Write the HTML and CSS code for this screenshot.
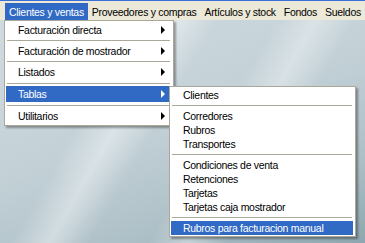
FILE: index.html
```html
<!DOCTYPE html>
<html lang="es">
<head>
    <meta charset="UTF-8">
    <title>Menu</title>
    <link rel="stylesheet" href="styles.css">
</head>
<body>
    <div class="menubar">
        <span class="bar-item active">Clientes y ventas</span>
        <span class="bar-item">Proveedores y compras</span>
        <span class="bar-item">Artículos y stock</span>
        <span class="bar-item">Fondos</span>
        <span class="bar-item">Sueldos</span>
    </div>

    <div class="desktop">
        <!-- menu principal -->
        <div class="menu main-menu">
            <div class="item has-sub">Facturación directa</div>
            <div class="sep"></div>
            <div class="item has-sub">Facturación de mostrador</div>
            <div class="sep"></div>
            <div class="item has-sub">Listados</div>
            <div class="sep wide"></div>
            <div class="item has-sub selected">Tablas</div>
            <div class="sep wide"></div>
            <div class="item has-sub">Utilitarios</div>
        </div>

        <!-- submenu Tablas -->
        <div class="menu sub-menu">
            <div class="item">Clientes</div>
            <div class="sep"></div>
            <div class="item">Corredores</div>
            <div class="item">Rubros</div>
            <div class="item">Transportes</div>
            <div class="sep"></div>
            <div class="item">Condiciones de venta</div>
            <div class="item">Retenciones</div>
            <div class="item">Tarjetas</div>
            <div class="item">Tarjetas caja mostrador</div>
            <div class="sep"></div>
            <div class="item selected">Rubros para facturacion manual</div>
        </div>
    </div>
</body>
</html>
```

FILE: styles.css
```css
/* --- base --- */
body {
    margin: 0;
    width: 365px;
    height: 243px;
    overflow: hidden;
    font-family: 'Liberation Sans', Arial, sans-serif;
    font-size: 10.5px;
    letter-spacing: -0.3px;
    color: #000;
    background: #ece9d8;
}

/* --- barra de menu --- */
.menubar {
    height: 20px;
    display: flex;
    align-items: stretch;
    padding: 0 0 0 5px;
    border-top: 1px solid #3a6fd8;
    background: #ece9d8;
    box-sizing: border-box;
}

.bar-item {
    display: flex;
    align-items: center;
    padding: 0 4px;
    margin-top: 2px;
    white-space: nowrap;
}

.bar-item.active {
    background: #316ac5;
    color: #fff;
}

/* --- fondo --- */
.desktop {
    position: relative;
    height: 223px;
    background:
        linear-gradient(120deg,
            transparent 0 28%,
            rgba(255,255,255,0.4) 36%,
            transparent 44% 56%,
            rgba(255,255,255,0.35) 64%,
            transparent 72%),
        linear-gradient(160deg, #d0dbe0 0%, #c3d1d7 45%, #aec0c7 75%, #8fa7b0 100%);
}

/* --- menus --- */
.menu {
    position: absolute;
    background: #fff;
    border: 1px solid #aca899;
    padding: 1px 2px 1px 1px;
    box-shadow: 2px 2px 2px rgba(0,0,0,0.35);
}

.main-menu {
    left: 4px;
    top: 0;
    width: 165px;
}

.sub-menu {
    left: 169px;
    top: 66px;
    width: 182px;
    z-index: 2;
}

.item {
    position: relative;
    white-space: nowrap;
}

.main-menu .item {
    height: 16px;
    line-height: 16px;
    padding-left: 12px;
}

.sub-menu .item {
    height: 14px;
    line-height: 14px;
    padding-left: 12px;
}

.item.selected {
    background: #316ac5;
    color: #fff;
}

.has-sub::after {
    content: "";
    position: absolute;
    right: 6px;
    top: 4px;
    border-left: 4px solid #000;
    border-top: 4px solid transparent;
    border-bottom: 4px solid transparent;
}

.has-sub.selected::after {
    border-left-color: #fff;
}

.sep {
    height: 1px;
    background: #aca899;
}

.main-menu .sep {
    margin: 2px 1px 2px 1px;
}

.main-menu .sep.wide {
    margin-top: 3px;
}

.sub-menu .sep {
    margin: 3px 1px 3px 1px;
}
```
